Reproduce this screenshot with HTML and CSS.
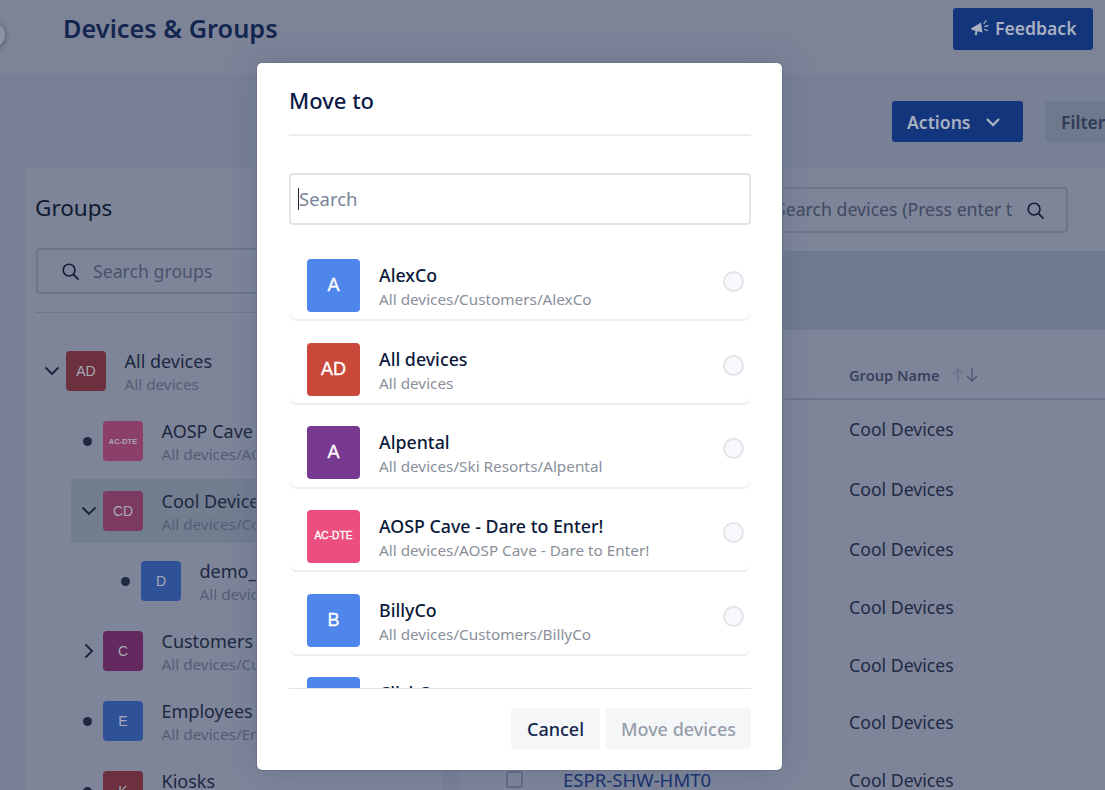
FILE: index.html
```html
<!DOCTYPE html>
<html lang="en">
<head>
<meta charset="utf-8">
<title>Devices &amp; Groups</title>
<link rel="stylesheet" href="styles.css">
</head>
<body>
<div class="app">
  <span class="collapse-knob"></span>
  <header class="topbar">
    <h1 class="page-title">Devices &amp; Groups</h1>
    <button class="btn btn-primary btn-feedback">
      <svg class="icon-mega" viewBox="0 0 20 18"><path d="M1 9.5 11 3.5l1.5 10-5-1.2-.9 4.2-1.9-.5.8-4.3L2 11z" fill="currentColor"/><path d="M14 4.5l2-3M15 7.5l3-.8M14.6 10.5l2.8 1" stroke="currentColor" stroke-width="1.3" fill="none" stroke-linecap="round"/></svg>
      Feedback
    </button>
  </header>
  <div class="toolbar">
    <button class="btn btn-primary btn-actions">Actions
      <svg class="icon-chev-sm" viewBox="0 0 16 10"><path d="M2 2l6 6 6-6" fill="none" stroke="currentColor" stroke-width="2.4"/></svg>
    </button>
    <button class="btn btn-filter">Filter</button>
  </div>
  <main class="columns">
    <section class="groups">
      <h2 class="groups-title">Groups</h2>
      <div class="search-groups">
        <svg class="icon-search" viewBox="0 0 20 20"><circle cx="8.5" cy="8.5" r="6.2" fill="none" stroke="currentColor" stroke-width="1.7"/><path d="M13 13l5.5 5.5" stroke="currentColor" stroke-width="1.7"/></svg>
        <span class="search-groups-text">Search groups</span>
      </div>
      <ul class="tree">
        <li class="node level-0">
          <svg class="toggle" viewBox="0 0 16 16"><path d="M1.5 4.5 8 11l6.5-6.5" fill="none" stroke="currentColor" stroke-width="1.9"/></svg>
          <span class="avatar a-maroon">AD</span>
          <div class="node-text"><div class="node-name">All devices</div><div class="node-path">All devices</div></div>
        </li>
        <li class="node level-1">
          <span class="dot"></span>
          <span class="avatar a-pink a-small">AC-DTE</span>
          <div class="node-text"><div class="node-name">AOSP Cave - Dare to Enter!</div><div class="node-path">All devices/AOSP Cave - Dare to Enter!</div></div>
        </li>
        <li class="node level-1 node-active">
          <svg class="toggle" viewBox="0 0 16 16"><path d="M1.5 4.5 8 11l6.5-6.5" fill="none" stroke="currentColor" stroke-width="1.9"/></svg>
          <span class="avatar a-rose">CD</span>
          <div class="node-text"><div class="node-name">Cool Devices</div><div class="node-path">All devices/Cool Devices</div></div>
        </li>
        <li class="node level-2">
          <span class="dot"></span>
          <span class="avatar a-blue">D</span>
          <div class="node-text"><div class="node-name">demo_</div><div class="node-path">All devices/Cool Devices/demo_</div></div>
        </li>
        <li class="node level-1">
          <svg class="toggle" viewBox="0 0 16 16"><path d="M4.5 1.5 11 8l-6.5 6.5" fill="none" stroke="currentColor" stroke-width="1.9"/></svg>
          <span class="avatar a-plum">C</span>
          <div class="node-text"><div class="node-name">Customers</div><div class="node-path">All devices/Customers</div></div>
        </li>
        <li class="node level-1">
          <span class="dot"></span>
          <span class="avatar a-blue">E</span>
          <div class="node-text"><div class="node-name">Employees</div><div class="node-path">All devices/Employees</div></div>
        </li>
        <li class="node level-1">
          <span class="dot"></span>
          <span class="avatar a-maroon">K</span>
          <div class="node-text"><div class="node-name">Kiosks</div><div class="node-path">All devices/Kiosks</div></div>
        </li>
      </ul>
    </section>
    <section class="devices">
      <div class="search-devices">
        <span class="search-devices-text">Search devices (Press enter t</span>
        <svg class="icon-search icon-search-dark" viewBox="0 0 20 20"><circle cx="8.5" cy="8.5" r="6.2" fill="none" stroke="currentColor" stroke-width="1.7"/><path d="M13 13l5.5 5.5" stroke="currentColor" stroke-width="1.7"/></svg>
      </div>
      <div class="band"><span class="band-btn"></span></div>
      <div class="table-head">
        <span class="th">Group Name</span>
        <svg class="sort" viewBox="0 0 28 16"><path d="M7 15V2M2 7l5-5 5 5" fill="none" stroke="#667087" stroke-width="1.4"/><path d="M21 1v13M16 9l5 5 5-5" fill="none" stroke="#4d5870" stroke-width="1.4"/></svg>
      </div>
      <div class="row row-tall"><span class="cell-group">Cool Devices</span></div>
      <div class="row row-tall"><span class="cell-group">Cool Devices</span></div>
      <div class="row row-tall"><span class="cell-group">Cool Devices</span></div>
      <div class="row"><span class="cell-group">Cool Devices</span></div>
      <div class="row"><span class="cell-group">Cool Devices</span></div>
      <div class="row"><span class="cell-group">Cool Devices</span></div>
      <div class="row"><span class="check"></span><a class="cell-name">ESPR-SHW-HMT0</a><span class="cell-group">Cool Devices</span></div>
    </section>
  </main>

  <div class="modal">
    <h2 class="modal-title">Move to</h2>
    <div class="modal-search">
      <input class="modal-input" type="text" placeholder="Search">
      <span class="caret"></span>
    </div>
    <div class="modal-list">
      <div class="item">
        <span class="tile t-blue">A</span>
        <div class="item-text"><div class="item-name">AlexCo</div><div class="item-path">All devices/Customers/AlexCo</div></div>
        <span class="radio"></span>
      </div>
      <div class="item">
        <span class="tile t-red">AD</span>
        <div class="item-text"><div class="item-name">All devices</div><div class="item-path">All devices</div></div>
        <span class="radio"></span>
      </div>
      <div class="item">
        <span class="tile t-purple">A</span>
        <div class="item-text"><div class="item-name">Alpental</div><div class="item-path">All devices/Ski Resorts/Alpental</div></div>
        <span class="radio"></span>
      </div>
      <div class="item">
        <span class="tile t-pink tile-small">AC-DTE</span>
        <div class="item-text"><div class="item-name">AOSP Cave - Dare to Enter!</div><div class="item-path">All devices/AOSP Cave - Dare to Enter!</div></div>
        <span class="radio"></span>
      </div>
      <div class="item">
        <span class="tile t-blue">B</span>
        <div class="item-text"><div class="item-name">BillyCo</div><div class="item-path">All devices/Customers/BillyCo</div></div>
        <span class="radio"></span>
      </div>
      <div class="item">
        <span class="tile t-blue">C</span>
        <div class="item-text"><div class="item-name">ClickCo</div><div class="item-path">All devices/Customers/ClickCo</div></div>
        <span class="radio"></span>
      </div>
    </div>
    <div class="modal-footer">
      <button class="mbtn mbtn-cancel">Cancel</button>
      <button class="mbtn mbtn-move">Move devices</button>
    </div>
  </div>
</div>
</body>
</html>
```
FILE: styles.css
```css
* { box-sizing: border-box; }
html, body { margin: 0; height: 100%; overflow: hidden; }
body { font-family: "Noto Sans", "Open Sans", sans-serif; background: #788096; color: #1c2740; }
button { font-family: inherit; border: 0; }
h1, h2, ul { margin: 0; padding: 0; }
ul { list-style: none; }

.app { position: relative; width: 1105px; height: 790px; overflow: hidden; }

.collapse-knob { position: absolute; left: -21px; top: 22px; width: 26px; height: 26px; border-radius: 50%; background: #8d93a4; box-shadow: 0 1px 5px rgba(30,40,60,.6); }

.topbar { height: 75px; background: #7d8498; border-bottom: 1px solid #767f93; display: flex; align-items: flex-start; justify-content: space-between; padding: 8px 12px 0 63px; }
.page-title { font-size: 25.3px; font-weight: 600; color: #14264f; line-height: 40px; }
.btn { display: inline-flex; align-items: center; border-radius: 3px; font-weight: 600; font-size: 17.6px; }
.btn-primary { background: #13357b; color: #a9b0c0; }
.btn-feedback { flex: none; width: 140px; height: 42px; padding: 0 0 2px 17px; gap: 5px; }
.icon-mega { width: 20px; height: 18px; }
.toolbar { height: 93px; width: 1300px; padding: 26px 0 0 892px; display: flex; gap: 22px; }
.btn-actions { flex: none; width: 131px; height: 41px; padding-left: 15px; gap: 14px; }
.icon-chev-sm { width: 16px; height: 10px; }
.btn-filter { flex: none; width: 90px; height: 41px; padding-left: 16px; background: #6f798e; color: #2f3a56; }

.columns { display: flex; margin-left: 25px; gap: 17px; }
.groups { flex: none; width: 418px; height: 640px; background: #7e8599; overflow: hidden; }
.groups-title { font-size: 22.5px; font-weight: 400; color: #0f1a30; line-height: 30px; margin: 25px 0 0 10px; }
.search-groups { height: 46px; margin: 25px 30px 0 11px; border: 2px solid #6d7689; border-radius: 4px; display: flex; align-items: center; padding-left: 23px; gap: 13px; }
.icon-search { width: 19px; height: 19px; color: #131d33; }
.search-groups-text { font-size: 17.7px; color: #4a536b; }
.tree { margin: 18px 30px 0 10px; padding-top: 26px; border-top: 1px solid #6f7789; }
.node { display: flex; align-items: center; height: 64px; margin-bottom: 6px; border-radius: 4px; color: #1c2740; }
.level-0 { margin-left: -1px; }
.level-1 { margin-left: 36px; }
.level-2 { margin-left: 74px; }
.node-active { background: #737d90; }
.toggle { flex: none; width: 16px; height: 16px; margin: 0 6px 0 10px; color: #1a2438; }
.dot { flex: none; width: 9px; height: 9px; border-radius: 50%; background: #1f2a40; margin: 0 11px 0 12px; }
.avatar { flex: none; width: 40px; height: 40px; border-radius: 4px; display: flex; align-items: center; justify-content: center; font-family: "Liberation Sans", Arial, sans-serif; font-size: 14px; color: #a7abb8; }
.a-small { font-size: 7.5px; font-weight: 700; }
.a-maroon { background: #6c303e; }
.a-pink { background: #8c3f68; }
.a-rose { background: #7d3a60; }
.a-blue { background: #2f5198; }
.a-plum { background: #64295f; }
.node-text { margin-left: 18.5px; padding-top: 1px; white-space: nowrap; min-width: 0; }
.node-name { font-size: 18px; line-height: 24px; font-weight: 400; }
.node-path { font-size: 15.3px; line-height: 22px; color: #545d74; }

.devices { flex: 1; min-width: 0; height: 640px; background: #7e8599; margin-right: -25px; overflow: hidden; }
.search-devices { width: 338px; height: 46px; margin: 19px 0 0 270px; border: 2px solid #6d7689; border-radius: 4px; display: flex; align-items: center; padding: 0 0 2px 44px; overflow: hidden; }
.search-devices-text { flex: none; width: 236px; overflow: hidden; white-space: nowrap; font-size: 17.7px; color: #3f4960; }
.icon-search-dark { margin: 2px 0 0 14px; flex: none; }
.band { height: 79px; margin-top: 18px; background: #6f7b8e; display: flex; justify-content: flex-end; align-items: center; }
.band-btn { width: 10px; height: 42px; background: #798196; border-radius: 4px 0 0 4px; }
.table-head { height: 70px; display: flex; align-items: center; padding: 22px 0 0 389px; border-bottom: 2px solid #6e778b; }
.th { font-size: 14.6px; font-weight: 600; color: #38435f; }
.sort { width: 28px; height: 16px; margin-left: 11px; }
.row { position: relative; height: 57.7px; display: flex; align-items: center; padding: 0 0 4px 389px; white-space: nowrap; }
.row-tall { height: 60px; padding-bottom: 2px; }
.cell-group { font-size: 17.7px; color: #1f2a44; }
.check { position: absolute; left: 46px; top: 18px; width: 17px; height: 17px; border: 2px solid #636c80; border-radius: 3px; }
.cell-name { position: absolute; left: 103px; top: 14px; font-size: 18.6px; color: #14306f; }

.modal { position: absolute; left: 257px; top: 62.5px; width: 525px; height: 707.5px; background: #fff; border-radius: 5px; box-shadow: 0 0 0 1px #6b7389, 0 0 30px rgba(70,85,115,.35); padding: 0 31px 0 32px; display: flex; flex-direction: column; }
.modal-title { flex: none; height: 73.5px; border-bottom: 2px solid #eceef1; font-size: 22px; font-weight: 500; color: #0a1a46; line-height: 75px; }
.modal-search { position: relative; margin-top: 37px; height: 52px; flex: none; }
.modal-input { width: 100%; height: 100%; border: 2px solid #e2e4ea; border-radius: 4px; padding: 0 8px 2px; font-family: inherit; font-size: 18.5px; outline: none; }
.modal-input::placeholder { color: #79839a; opacity: 1; }
.caret { position: absolute; left: 9px; top: 15px; width: 1px; height: 22px; background: #1c2740; }
.modal-list { height: 464px; padding-top: 12.5px; flex: none; overflow: hidden; border-bottom: 1px solid #e3e5ea; }
.item { display: flex; align-items: flex-start; height: 83.7px; padding: 21.5px 7px 0 18px; border-bottom: 2px solid #eceef1; border-radius: 0 0 8px 8px; }
.tile { flex: none; width: 53px; height: 53px; border-radius: 4px; display: flex; align-items: center; justify-content: center; font-family: "Liberation Sans", Arial, sans-serif; font-size: 18px; color: #fff; -webkit-text-stroke: .3px #fff; }
.tile-small { font-size: 10.2px; padding-bottom: 2px; }
.t-blue { background: #4f86ec; }
.t-red { background: #c9483a; }
.t-purple { background: #783a90; }
.t-pink { background: #ec4f7f; }
.item-text { flex: 1; margin-left: 19px; margin-top: 4px; white-space: nowrap; }
.item-name { font-size: 17.8px; line-height: 25px; font-weight: 500; color: #0b1a3a; }
.item-path { font-size: 15.3px; line-height: 22px; color: #8a8f9a; }
.radio { flex: none; width: 21px; height: 21px; margin-top: 12px; border-radius: 50%; border: 2px solid #e3e5e9; background: #f7f9fc; }
.modal-footer { display: flex; justify-content: flex-end; gap: 6px; margin-top: 19px; }
.mbtn { height: 41px; border-radius: 3px; background: #f5f6f7; font-size: 18px; font-weight: 500; }
.mbtn-cancel { width: 89px; color: #14264f; }
.mbtn-move { width: 145px; color: #969dab; }
```
